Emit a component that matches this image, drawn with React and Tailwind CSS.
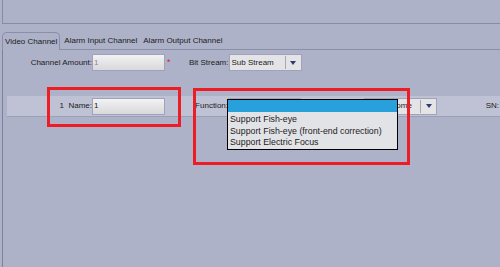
import React from 'react'

const Field = ({ value, muted, className = '' }) => (
  <div
    className={`h-[17px] w-[73px] border border-[#9ea2ba] bg-gradient-to-b from-[#f2f2f3] to-[#d9d9dc] flex items-center pl-[1px] ${muted ? 'text-[#8a8a8a]' : 'text-[#1b1b1b]'} ${className}`}
  >
    {value}
  </div>
)

const Select = ({ value, className = '' }) => (
  <div className={`h-[17px] w-[73px] border border-[#a0a4ba] bg-[#e4e4e7] flex items-center ${className}`}>
    <span className="flex-1 pl-[2px] truncate">{value}</span>
    <span className="h-[13px] w-px bg-[#a8a8ae]" />
    <span className="w-[15px] flex items-center justify-center">
      <svg width="6" height="4" viewBox="0 0 6 4">
        <path d="M0 0H6L3 4Z" fill="#2b3a7a" />
      </svg>
    </span>
  </div>
)

export default function App() {
  return (
    <div
      className="relative w-[500px] h-[267px] overflow-hidden bg-[#aeb2c8] text-[8px] text-[#1b1b1b] flex flex-col"
      style={{ fontFamily: '"Liberation Sans", Arial, sans-serif' }}
    >
      {/* top panel */}
      <div className="h-[24px] ml-[2px] border-l border-b border-[#878ba3] shrink-0" />
      <div className="h-[8px] shrink-0" />

      {/* tabs */}
      <div className="flex items-end h-[18px] shrink-0 ml-[2px]">
        <div className="h-[18px] px-[2px] flex items-center border border-b-0 border-[#8a8ea6] rounded-t-[5px] text-[8px]">
          Video Channel
        </div>
        <div className="flex-1 h-full border-b border-[#8a8ea6] flex items-center gap-[6px] pl-[4px] text-[8px]">
          <span>Alarm Input Channel</span>
          <span>Alarm Output Channel</span>
        </div>
      </div>

      {/* content */}
      <div className="flex-1 ml-[2px] border-l border-[#7d8199] flex flex-col">
        <div className="flex items-center mt-[4px] h-[17px]">
          <span className="w-[89px] text-right">Channel Amount:</span>
          <Field value="1" muted />
          <span className="text-[#e0202a] ml-[2px] text-[9px] leading-none">*</span>
          <span className="w-[58px] text-right">Bit Stream:</span>
          <Select value="Sub Stream" />
        </div>

        <div className="mt-[25px] ml-[4px] h-[21px] bg-[#bec2d4] border-b border-[#9ca0b6] flex items-center">
          <span className="w-[85px] text-right">1&nbsp;&nbsp;Name:</span>
          <Field value="1" />
          <span className="w-[63px] text-right">Function:</span>
          <Select value="" />
          <span className="w-[63px]" />
          <Select value="Smart Home" />
          <span className="ml-auto mr-[1px]">SN:</span>
        </div>
      </div>

      {/* open dropdown list */}
      <div className="absolute left-[227px] top-[99px] w-[171px] h-[51px] border border-black bg-[#e2e3e7] flex flex-col text-[8.8px]">
        <div className="h-[12px] bg-[#28a0dc]" />
        <div className="pl-[2px] pt-[2px] leading-[11.5px]">
          <div>Support Fish-eye</div>
          <div>Support Fish-eye (front-end correction)</div>
          <div>Support Electric Focus</div>
        </div>
      </div>

      {/* red annotation boxes */}
      <div className="absolute left-[47px] top-[87px] w-[134px] h-[40px] border-[3px] border-[#ee1c24]" />
      <div className="absolute left-[193px] top-[88px] w-[217px] h-[77px] border-[3px] border-[#ee1c24]" />
    </div>
  )
}
